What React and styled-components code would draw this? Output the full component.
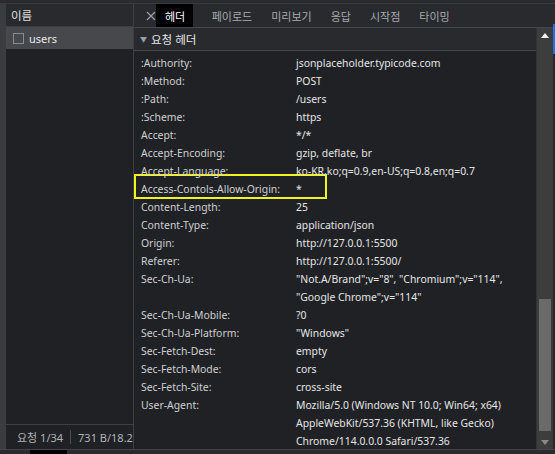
import React from "react";
import styled, { createGlobalStyle } from "styled-components";

const GlobalStyle = createGlobalStyle`
  html, body {
    margin: 0;
    padding: 0;
    background: #202124;
  }
  body {
    font-family: "Noto Sans", "Noto Sans CJK KR", sans-serif;
  }
`;

const Screen = styled.div`
  width: 555px;
  height: 454px;
  display: flex;
  flex-direction: column;
  background: #202124;
  overflow: hidden;
  font-size: 11px;
  color: #d4d4d4;
`;

const TopStrip = styled.div`
  height: 3px;
  flex: none;
  background: #2a2b2e;
  border-bottom: 1px solid #3a3b3e;
`;

const Main = styled.div`
  flex: 1;
  display: flex;
  min-height: 0;
`;

const LeftEdge = styled.div`
  width: 6px;
  flex: none;
  background: #3b3c3f;
`;

const LeftPanel = styled.div`
  width: 127px;
  flex: none;
  display: flex;
  flex-direction: column;
  background: #202124;
  border-right: 1px solid #3e3f42;
`;

const NameHeader = styled.div`
  height: 22px;
  display: flex;
  align-items: center;
  padding-left: 5px;
  background: #292a2d;
  border-bottom: 1px solid #3e3f42;
  color: #e0e0e0;
  font-size: 11.5px;
`;

const RequestRow = styled.div`
  height: 22px;
  display: flex;
  align-items: center;
  gap: 5px;
  padding-left: 7px;
  background: ${({ selected }) => (selected ? "#47484b" : "transparent")};
  color: #e8e8e8;
`;

const Check = styled.span`
  width: 9px;
  height: 9px;
  border: 1px solid #8a8b8e;
  display: inline-block;
`;

const Filler = styled.div`
  flex: 1;
`;

const Footer = styled.div`
  height: 24px;
  display: flex;
  align-items: center;
  border-top: 1px solid #3e3f42;
  padding-left: 11px;
  color: #b0b3b8;
  white-space: nowrap;
  overflow: hidden;
  font-size: 11px;
`;

const Sep = styled.span`
  width: 1px;
  height: 14px;
  background: #4a4b4e;
  margin: 0 7px;
`;

const RightPanel = styled.div`
  flex: 1;
  display: flex;
  flex-direction: column;
  min-width: 0;
`;

const TabBar = styled.div`
  height: 23px;
  flex: none;
  display: flex;
  align-items: stretch;
  background: #292a2d;
  border-bottom: 1px solid #45464a;
`;

const Close = styled.div`
  width: 22px;
  display: flex;
  align-items: center;
  justify-content: flex-end;
  padding-right: 0;
`;

const Tab = styled.div`
  display: flex;
  align-items: center;
  padding: ${({ active }) => (active ? "0 8px 0 9px" : "0 9.5px")};
  margin-right: ${({ active }) => (active ? "9px" : "0")};
  background: ${({ active }) => (active ? "#000000" : "transparent")};
  color: ${({ active }) => (active ? "#ffffff" : "#a8abb0")};
  font-size: 11px;
`;

const Body = styled.div`
  flex: 1;
  display: flex;
  min-height: 0;
`;

const Scroll = styled.div`
  flex: 1;
  overflow: hidden;
  min-width: 0;
`;

const Section = styled.div`
  height: 22px;
  display: flex;
  align-items: center;
  gap: 4px;
  padding-left: 6px;
  background: #292a2d;
  border-bottom: 1px solid #45464a;
  color: #e8e8e8;
  font-size: 11.5px;
`;

const Arrow = styled.span`
  font-size: 7px;
  color: #9aa0a6;
`;

const Rows = styled.div`
  padding-top: 3px;
`;

const Row = styled.div`
  display: grid;
  grid-template-columns: 155px 1fr;
  padding-left: 7px;
  line-height: 18px;
  position: relative;
  white-space: nowrap;
  font-size: 10.4px;
`;

const Key = styled.div`
  color: #d0d1d3;
  position: relative;
  z-index: 1;
`;

const Value = styled.div`
  color: #e6e6e6;
  position: relative;
  z-index: 1;
`;

const Highlight = styled.div`
  position: absolute;
  left: 0;
  top: -6px;
  width: 193px;
  height: 25px;
  box-sizing: border-box;
  border: 2px solid #f2f21e;
  background: #202124;
  z-index: 0;
  pointer-events: none;
`;

const ScrollBar = styled.div`
  width: 16px;
  flex: none;
  display: flex;
  flex-direction: column;
  align-items: center;
  background: #3d3d3d;
  border-left: 1px solid #333;
`;

const ScrollArrow = styled.div`
  height: 14px;
  display: flex;
  align-items: center;
  justify-content: center;
  flex: none;
`;

const Track = styled.div`
  flex: 1;
  width: 100%;
  display: flex;
  flex-direction: column;
  justify-content: flex-end;
  padding: 0 2px;
  box-sizing: border-box;
`;

const Thumb = styled.div`
  height: 132px;
  background: #6a6a6a;
  margin-bottom: 4px;
`;

const EdgeStrip = styled.div`
  width: 2px;
  flex: none;
  background: linear-gradient(#2a2b2e 0, #2a2b2e 20px, #1a73e8 20px, #1a73e8 50px, #26272a 50px);
`;

const BottomStrip = styled.div`
  height: 4px;
  flex: none;
  background: #2a2b2e;
  border-top: 1px solid #45464a;
  display: flex;
`;

const BottomMark = styled.div`
  width: 37px;
  margin-left: 30px;
  background: #000;
`;

const headers = [
  [":Authority:", "jsonplaceholder.typicode.com"],
  [":Method:", "POST"],
  [":Path:", "/users"],
  [":Scheme:", "https"],
  ["Accept:", "*/*"],
  ["Accept-Encoding:", "gzip, deflate, br"],
  ["Accept-Language:", "ko-KR,ko;q=0.9,en-US;q=0.8,en;q=0.7"],
  ["Access-Contols-Allow-Origin:", "*", true],
  ["Content-Length:", "25"],
  ["Content-Type:", "application/json"],
  ["Origin:", "http://127.0.0.1:5500"],
  ["Referer:", "http://127.0.0.1:5500/"],
  ["Sec-Ch-Ua:", "\"Not.A/Brand\";v=\"8\", \"Chromium\";v=\"114\","],
  ["", "\"Google Chrome\";v=\"114\""],
  ["Sec-Ch-Ua-Mobile:", "?0"],
  ["Sec-Ch-Ua-Platform:", "\"Windows\""],
  ["Sec-Fetch-Dest:", "empty"],
  ["Sec-Fetch-Mode:", "cors"],
  ["Sec-Fetch-Site:", "cross-site"],
  ["User-Agent:", "Mozilla/5.0 (Windows NT 10.0; Win64; x64)"],
  ["", "AppleWebKit/537.36 (KHTML, like Gecko)"],
  ["", "Chrome/114.0.0.0 Safari/537.36"],
];

const tabs = ["헤더", "페이로드", "미리보기", "응답", "시작점", "타이밍"];

const App = () => {
  return (
    <>
      <GlobalStyle />
      <Screen>
        <TopStrip />
        <Main>
          <LeftEdge />
          <LeftPanel>
            <NameHeader>이름</NameHeader>
            <RequestRow selected>
              <Check />
              users
            </RequestRow>
            <Filler />
            <Footer>
              요청 1/34
              <Sep />
              731 B/18.2
            </Footer>
          </LeftPanel>
          <RightPanel>
            <TabBar>
              <Close>
                <svg width="10" height="10" viewBox="0 0 10 10">
                  <path d="M1 1L9 9M9 1L1 9" stroke="#9aa0a6" strokeWidth="1.2" />
                </svg>
              </Close>
              {tabs.map((t, i) => (
                <Tab key={t} active={i === 0}>
                  {t}
                </Tab>
              ))}
            </TabBar>
            <Body>
              <Scroll>
                <Section>
                  <Arrow>▼</Arrow>
                  요청 헤더
                </Section>
                <Rows>
                  {headers.map(([k, v, hl], i) => (
                    <Row key={i}>
                      {hl && <Highlight />}
                      <Key>{k}</Key>
                      <Value>{v}</Value>
                    </Row>
                  ))}
                </Rows>
              </Scroll>
              <ScrollBar>
                <ScrollArrow>
                  <svg width="8" height="5" viewBox="0 0 8 5">
                    <path d="M0 5L4 0L8 5Z" fill="#f0f0f0" />
                  </svg>
                </ScrollArrow>
                <Track>
                  <Thumb />
                </Track>
                <ScrollArrow>
                  <svg width="8" height="5" viewBox="0 0 8 5">
                    <path d="M0 0L8 0L4 5Z" fill="#8a8a8a" />
                  </svg>
                </ScrollArrow>
              </ScrollBar>
            </Body>
          </RightPanel>
          <EdgeStrip />
        </Main>
        <BottomStrip>
          <BottomMark />
        </BottomStrip>
      </Screen>
    </>
  );
};

export default App;
